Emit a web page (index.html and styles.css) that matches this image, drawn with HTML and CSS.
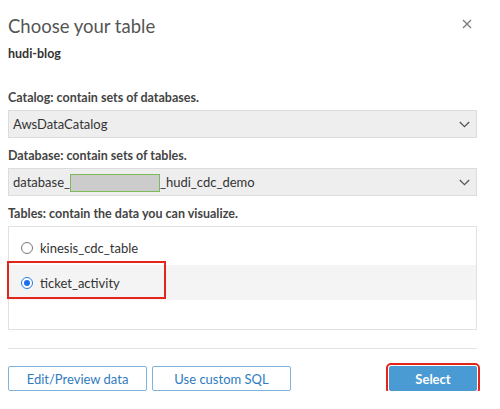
FILE: index.html
```html
<!DOCTYPE html>
<html>
<head>
<meta charset="utf-8">
<link rel="stylesheet" href="styles.css">
</head>
<body>
<div class="modal">
  <div class="header">
    <h1 class="title">Choose your table</h1>
    <svg class="close" width="10" height="10" viewBox="0 0 10 10"><path d="M1 1L9 9M9 1L1 9" stroke="#777" stroke-width="1.2" fill="none"/></svg>
  </div>
  <div class="subtitle">hudi-blog</div>

  <div class="label first">Catalog: contain sets of databases.</div>
  <div class="select">
    <span class="value">AwsDataCatalog</span>
    <svg class="chev" width="11" height="7" viewBox="0 0 11 7"><path d="M0.8 1L5.5 5.7L10.2 1" stroke="#555" stroke-width="1.3" fill="none"/></svg>
  </div>

  <div class="label">Database: contain sets of tables.</div>
  <div class="select">
    <span class="value">database_<span class="redact"></span>_hudi_cdc_demo</span>
    <svg class="chev" width="11" height="7" viewBox="0 0 11 7"><path d="M0.8 1L5.5 5.7L10.2 1" stroke="#555" stroke-width="1.3" fill="none"/></svg>
  </div>

  <div class="label">Tables: contain the data you can visualize.</div>
  <div class="list">
    <div class="row">
      <span class="radio"></span>
      <span class="name">kinesis_cdc_table</span>
    </div>
    <div class="row selected">
      <span class="radio on"></span>
      <span class="name">ticket_activity</span>
      <span class="mark"></span>
    </div>
  </div>

  <div class="divider"></div>

  <div class="footer">
    <div class="left">
      <button class="btn">Edit/Preview data</button>
      <button class="btn">Use custom SQL</button>
    </div>
    <button class="btn primary">Select</button>
  </div>
</div>
</body>
</html>
```
FILE: styles.css
```css
* { box-sizing: border-box; }
html, body { margin: 0; padding: 0; background: #fff; }
body { font-family: Lato, "Open Sans", sans-serif; color: #333; }

.modal { padding: 14px 23px 0 8px; width: 500px; }

.header { display: flex; justify-content: space-between; align-items: center; }
.title { margin: 0; font-size: 18.5px; line-height: 24px; font-weight: 400; color: #555; }
.close { margin-right: 5px; margin-top: -4px; }

.subtitle { margin-top: 8px; font-size: 12.5px; line-height: 16px; font-weight: 700; color: #333; }

.label { font-size: 12.5px; line-height: 16px; font-weight: 700; color: #444; margin-top: 10px; margin-bottom: 4px; }
.label.first { margin-top: 28px; }

.select { height: 28px; background: #eee; border: 1px solid #dcdcdc; display: flex; align-items: center; justify-content: space-between; padding: 0 6px 0 4px; }
.value { font-size: 13px; color: #333; display: flex; align-items: center; }
.redact { display: inline-block; width: 90px; height: 18px; background: #ccc; border: 1px solid #7dbb5a; margin-top: 1px; }
.chev { display: block; }

.list { height: 104px; border: 1px solid #e2e2e2; padding-top: 3px; }
.row { position: relative; height: 35px; display: flex; align-items: center; padding-left: 12px; }
.row.selected { background: #f4f4f4; }
.radio { width: 12px; height: 12px; border-radius: 50%; border: 1px solid #777; background: #fff; margin-right: 7px; position: relative; flex: none; }
.radio.on { border: 1px solid #2a7be0; }
.radio.on::after { content: ""; position: absolute; left: 2px; top: 2px; width: 6px; height: 6px; border-radius: 50%; background: #1f6feb; }
.name { font-size: 13px; color: #333; }
.mark { position: absolute; left: -2px; top: -4px; width: 159px; height: 38px; border: 2px solid #e4251b; }

.divider { margin-top: 18px; border-top: 1px solid #e2e2e2; }

.footer { display: flex; justify-content: space-between; align-items: center; margin-top: 17px; }
.left { display: flex; gap: 5px; }
.btn { height: 25px; border: 1px solid #7fb2dc; background: #fff; color: #2f7bbf; font-family: inherit; font-size: 13px; border-radius: 2px; padding: 0; }
.left .btn { width: 139px; }
.btn.primary { width: 88px; background: #4a9bd3; border-color: #4a9bd3; color: #fff; font-weight: 700; outline: 2px solid #e4251b; outline-offset: 1px; }
```
